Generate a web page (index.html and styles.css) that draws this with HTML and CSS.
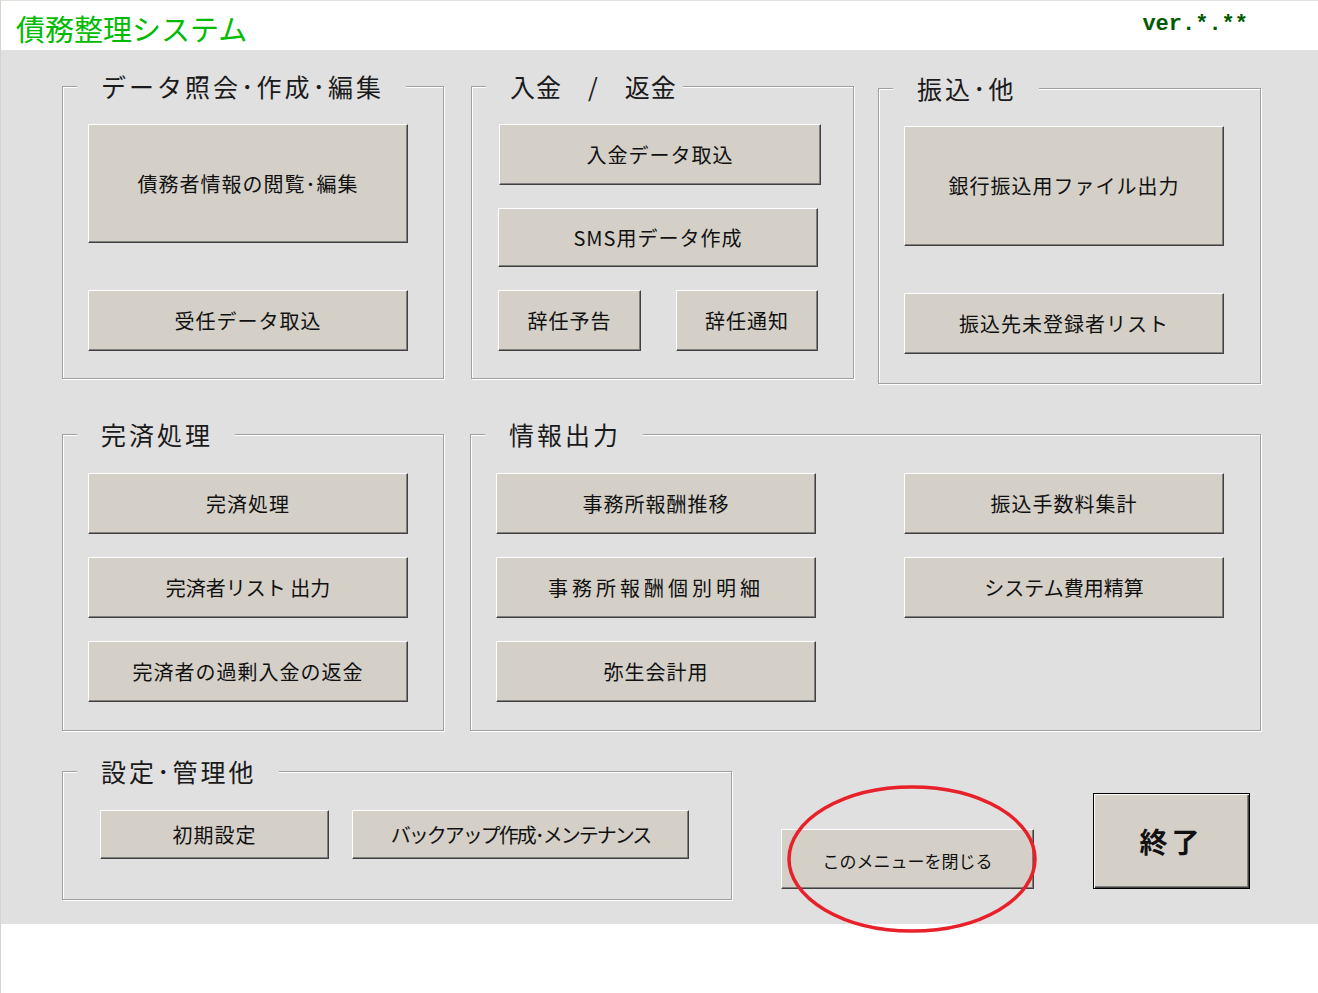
FILE: index.html
```html
<!DOCTYPE html>
<html lang="ja">
<head>
  <meta charset="UTF-8">
  <title>債務整理システム</title>
  <link rel="stylesheet" href="styles.css">
</head>
<body>
  <div class="window">
    <div class="header">
      <div class="title">債務整理システム</div>
      <div class="version">ver.*.**</div>
    </div>

    <div class="main">
      <div class="row row-1">
        <div class="group g-data">
          <div class="legend">データ照会･作成･編集</div>
          <div class="stack gap-47">
            <button class="btn w320 h119">債務者情報の閲覧･編集</button>
            <button class="btn w320 h61">受任データ取込</button>
          </div>
        </div>

        <div class="group g-money">
          <div class="legend legend-tight">入金　/　返金</div>
          <div class="stack gap-23">
            <button class="btn w322 h61 nudge">入金データ取込</button>
            <button class="btn w320 h59">SMS用データ作成</button>
            <div class="pair">
              <button class="btn w143 h61">辞任予告</button>
              <button class="btn w142 h61">辞任通知</button>
            </div>
          </div>
        </div>

        <div class="group g-transfer">
          <div class="legend">振込･他</div>
          <div class="stack gap-47">
            <button class="btn w320 h120">銀行振込用ファイル出力</button>
            <button class="btn w320 h61">振込先未登録者リスト</button>
          </div>
        </div>
      </div>

      <div class="row row-2">
        <div class="group g-done">
          <div class="legend">完済処理</div>
          <div class="stack gap-23">
            <button class="btn w320 h61">完済処理</button>
            <button class="btn w320 h61 kana">完済者リスト 出力</button>
            <button class="btn w320 h61">完済者の過剰入金の返金</button>
          </div>
        </div>

        <div class="group g-report">
          <div class="legend">情報出力</div>
          <div class="report-grid">
            <button class="btn w320 h61">事務所報酬推移</button>
            <button class="btn w320 h61">振込手数料集計</button>
            <button class="btn w320 h61 wide">事務所報酬個別明細</button>
            <button class="btn w320 h61 kana">システム費用精算</button>
            <button class="btn w320 h61">弥生会計用</button>
          </div>
        </div>
      </div>

      <div class="row row-3">
        <div class="group g-settings">
          <div class="legend">設定･管理他</div>
          <div class="pair pair-settings">
            <button class="btn w229 h49">初期設定</button>
            <button class="btn w337 h49 narrow">バックアップ作成･メンテナンス</button>
          </div>
        </div>

        <div class="close-wrap">
          <button class="btn btn-close">このメニューを閉じる</button>
          <svg class="circle" width="260" height="156" viewBox="0 0 260 156">
            <ellipse cx="130" cy="78" rx="123" ry="72" fill="none" stroke="#e8202a" stroke-width="3.5"/>
          </svg>
        </div>

        <button class="btn btn-exit">終了</button>
      </div>
    </div>
  </div>
</body>
</html>
```

FILE: styles.css
```css
* {
  box-sizing: border-box;
}
body {
  margin: 0;
  background: #fff;
  font-family: "Noto Sans CJK JP", "Noto Sans", sans-serif;
  color: #111;
}
.window {
  width: 1318px;
  height: 993px;
  border-left: 1px solid #d8d4cc;
  border-top: 1px solid #e4e2dc;
}
.header {
  height: 49px;
  display: flex;
  align-items: center;
  justify-content: space-between;
  padding: 0 70px 0 15px;
  background: #fff;
}
.title {
  font-size: 29px;
  color: #00bb00;
  line-height: 1;
  margin-top: 5px;
}
.version {
  font-family: "Liberation Mono", "DejaVu Sans Mono", monospace;
  font-size: 22px;
  font-weight: bold;
  color: #005a00;
  margin-bottom: 2px;
}
.main {
  height: 874px;
  background: #e0e0e0;
  padding: 36px 0 0 61px;
}
.row {
  display: flex;
  align-items: flex-start;
}
.row-2 {
  margin-top: 50px;
}
.row-3 {
  margin-top: 40px;
}

/* group frames */
.group {
  position: relative;
  border: 1px solid #a0a0a0;
  box-shadow: 1px 1px 0 #fff, inset 1px 1px 0 #fff;
}
.legend {
  position: absolute;
  top: -16px;
  left: 14px;
  padding: 0 22px 0 24px;
  background: #e0e0e0;
  font-size: 25px;
  line-height: 30px;
  letter-spacing: 3px;
  color: #1a1a1a;
  white-space: nowrap;
}
.legend-tight {
  letter-spacing: 1px;
  padding-right: 6px;
}
.g-data {
  width: 382px;
  height: 293px;
  padding: 37px 0 0 25px;
}
.g-money {
  width: 383px;
  height: 293px;
  margin-left: 27px;
  padding: 37px 0 0 26px;
}
.g-transfer {
  width: 383px;
  height: 296px;
  margin-left: 24px;
  margin-top: 2px;
  padding: 37px 0 0 25px;
}
.g-done {
  width: 382px;
  height: 297px;
  padding: 38px 0 0 25px;
}
.g-report {
  width: 791px;
  height: 297px;
  margin-left: 26px;
  padding: 38px 0 0 25px;
}
.g-settings {
  width: 670px;
  height: 129px;
  padding: 38px 0 0 37px;
}

.stack {
  display: flex;
  flex-direction: column;
  align-items: flex-start;
}
.gap-47 {
  gap: 47px;
}
.gap-23 {
  gap: 23px;
}
.pair {
  display: flex;
  gap: 35px;
}
.pair-settings {
  gap: 23px;
}
.report-grid {
  display: grid;
  grid-template-columns: 320px 320px;
  column-gap: 88px;
  row-gap: 23px;
}

/* buttons */
.btn {
  display: flex;
  align-items: center;
  justify-content: center;
  padding: 0;
  margin: 0;
  background: #d4d0c8;
  border-top: 1px solid #fff;
  border-left: 1px solid #fff;
  border-right: 1px solid #404040;
  border-bottom: 1px solid #404040;
  box-shadow: inset -1px -1px 0 #808080;
  font-family: "Noto Sans CJK JP", "Noto Sans", sans-serif;
  font-size: 20px;
  letter-spacing: 1px;
  line-height: 1;
  color: #111;
  white-space: nowrap;
}
.nudge {
  margin-left: 1px;
}
.wide {
  letter-spacing: 4px;
}
.kana {
  letter-spacing: 0;
}
.narrow {
  letter-spacing: -2px;
}
.w320 { width: 320px; }
.w322 { width: 322px; }
.w143 { width: 143px; }
.w142 { width: 142px; }
.w229 { width: 229px; }
.w337 { width: 337px; }
.h119 { height: 119px; }
.h120 { height: 120px; }
.h61 { height: 61px; }
.h59 { height: 59px; }
.h49 { height: 49px; }

.close-wrap {
  position: relative;
  margin-left: 49px;
  margin-top: 58px;
}
.btn-close {
  width: 253px;
  height: 60px;
  font-size: 17px;
  letter-spacing: 0;
  padding-top: 2px;
}
.circle {
  position: absolute;
  left: 1px;
  top: -48px;
}
.btn-exit {
  width: 157px;
  height: 96px;
  margin-left: 59px;
  margin-top: 22px;
  border: 1px solid #000;
  box-shadow: inset 1px 1px 0 #fff, inset -1px -1px 0 #404040, inset -2px -2px 0 #808080;
  font-size: 28px;
  font-weight: bold;
  letter-spacing: 4px;
}
```
